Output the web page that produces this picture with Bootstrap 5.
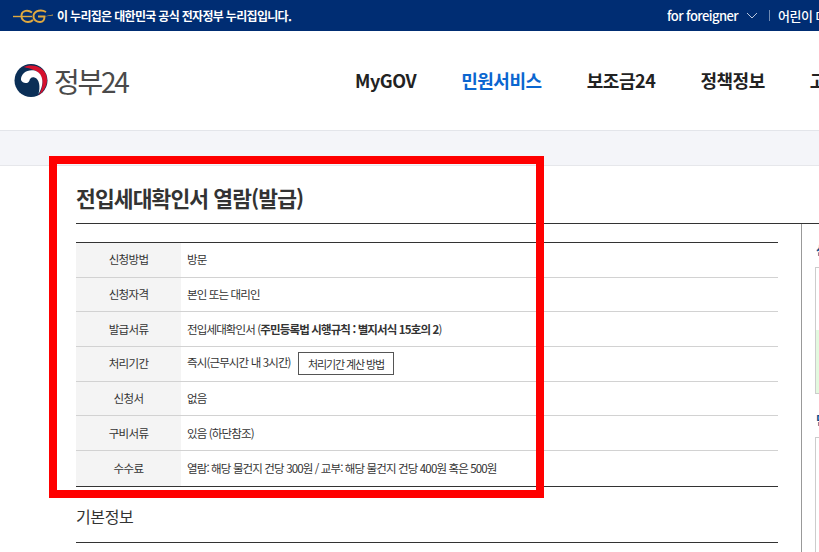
<!DOCTYPE html>
<html lang="ko">
<head>
<meta charset="utf-8">
<title>전입세대확인서 열람(발급)</title>
<link href="https://cdn.jsdelivr.net/npm/bootstrap@5.3.0/dist/css/bootstrap.min.css" rel="stylesheet">
<style>
html, body { height: 552px; overflow: hidden; }
body { font-family: "Noto Sans CJK KR", "Noto Sans", sans-serif; color: #333; position: relative; background: #fff; }
.gov-topbar { height: 31px; background: #002d73; color: #fff; font-size: 12px; font-weight: 700; letter-spacing: -0.68px; padding-left: 13px; white-space: nowrap; }
.gov-topbar-right { margin-left: auto; font-size: 13px; font-weight: 500; letter-spacing: -0.55px; width: 152px; flex: none; overflow: hidden; }
.gov-topbar-sep { width: 1px; height: 11px; background: #6f8ab3; margin: 0 8px 0 11px; flex: none; }
.gov-head { height: 100px; border-bottom: 1px solid #e3e5ea; padding-left: 14px; white-space: nowrap; overflow: hidden; }
.gov-logo-text { font-size: 28px; line-height: 1; color: #4a4a4a; letter-spacing: -2.3px; margin-left: 6px; font-weight: 400; width: 73px; flex: none; }
.gov-nav { margin-left: 228px; gap: 45px; font-size: 18px; font-weight: 700; color: #222; letter-spacing: -0.45px; flex: none; }
.gov-nav-on { color: #0b66d0; }
.gov-strip { height: 35px; background: #f4f5f9; border-bottom: 1px solid #e6e7eb; }
.gov-title-zone { margin-left: 76px; height: 58px; border-bottom: 1px solid #333; }
.gov-title { font-size: 21.5px; font-weight: 700; color: #333; letter-spacing: -0.9px; line-height: 1; margin: 0; padding-top: 21px; }
.gov-main { margin-left: 76px; }
.gov-left { width: 702px; flex: none; padding-top: 18px; }
.gov-info { width: 702px; border-collapse: collapse; border-top: 1px solid #333; border-bottom: 1px solid #333; font-size: 11.5px; letter-spacing: -0.87px; margin: 0; table-layout: fixed; }
.gov-info th, .gov-info td { border-bottom: 1px solid #d2d2d2; padding: 0 6px; vertical-align: middle; height: 34.7px; color: #333; background: transparent; }
.gov-info tr:last-child th, .gov-info tr:last-child td { border-bottom: 0; height: 35.7px; }
.gov-info .gov-label { width: 105px; background: #f4f4f4; text-align: center; font-weight: 400; letter-spacing: -0.65px; }
.gov-calc { border: 1px solid #555; font-size: 11px; letter-spacing: -1.1px; color: #333; padding: 0 9px; height: 23px; line-height: 20px; margin-left: 5px; border-radius: 0; background: #fff; vertical-align: middle; }
.gov-sub { font-size: 16px; font-weight: 400; letter-spacing: -0.4px; color: #333; line-height: 1; margin: 0; padding: 21px 0 18px; border-bottom: 1px solid #333; }
.gov-side { margin-left: 23px; border-left: 1px solid #999; flex: 1 1 auto; height: 330px; padding-left: 13px; overflow: hidden; }
.gov-side-h { font-size: 12px; font-weight: 700; color: #0d4d8c; line-height: 1; height: 12px; margin: 20px 0 11px; padding-left: 1px; }
.gov-side-box { border: 1px solid #ccc; border-right: 0; height: 127px; background: #fff; }
.gov-side-green { height: 63px; margin-top: 62px; background: #e3f9df; }
.gov-side-box2 { height: 130px; }
.gov-mark { position: absolute; left: 49px; top: 156px; width: 495px; height: 342px; border: 8px solid #ff0000; pointer-events: none; }
</style>
</head>
<body>
<div class="gov-topbar d-flex align-items-center">
  <svg width="40" height="16" viewBox="0 0 40 16" class="flex-shrink-0 me-1" aria-hidden="true">
    <path d="M0 8.500H19" stroke="#e0a93f" stroke-width="1.400" fill="none"/>
    <path d="M19 4.500C15 1.500 9 2.500 8.500 7C8 12 12 14 15 14C17 14 19 13 20 12" stroke="#e0a93f" stroke-width="1.900" fill="none"/>
    <path d="M33 4C29 1.500 21.500 2 20.500 7.500C20 12 24 14 27 14C30 14 31.500 12 31.500 8.500H25" stroke="#e0a93f" stroke-width="1.900" fill="none"/>
    <path d="M31 8.500L40 6.500V7.500Z" fill="#e0a93f"/>
  </svg>
  <span>이 누리집은 대한민국 공식 전자정부 누리집입니다.</span>
  <div class="gov-topbar-right d-flex align-items-center">
    <span>for foreigner</span>
    <svg width="12" height="7" viewBox="0 0 12 7" class="ms-2 flex-shrink-0" aria-hidden="true"><path d="M1 1l5 5 5-5" stroke="#b9c6dc" fill="none"/></svg>
    <span class="gov-topbar-sep"></span>
    <span class="text-nowrap">어린이 메뉴</span>
  </div>
</div>
<header class="gov-head d-flex align-items-center">
  <svg width="34" height="33" viewBox="0 0 33 33" class="flex-shrink-0" aria-hidden="true">
    <circle cx="16.500" cy="16.500" r="16.500" fill="#0b2f57"/>
    <path d="M9 3C17-1 33 2 32.500 16.500C32.300 23 28 28.500 24 31.500C29 24 30 13 23 8C18 4.500 12 4 9 3Z" fill="#d5112e"/>
    <path d="M6.500 16C6 9.500 13 5 20 6.500C28 8.500 31 19 24 30C26 23 25 15 20 13.500C17 12.500 15 15 15 16.500C14 20 8 20 6.500 16Z" fill="#fff"/>
  </svg>
  <span class="gov-logo-text">정부24</span>
  <nav class="gov-nav d-flex">
    <span>MyGOV</span><span class="gov-nav-on">민원서비스</span><span>보조금24</span><span>정책정보</span><span>고객센터</span>
  </nav>
</header>
<div class="gov-strip"></div>
<div class="gov-title-zone"><h1 class="gov-title">전입세대확인서 열람(발급)</h1></div>
<div class="gov-main d-flex">
  <div class="gov-left">
    <table class="gov-info">
      <tbody>
        <tr><th class="gov-label" scope="row">신청방법</th><td>방문</td></tr>
        <tr><th class="gov-label" scope="row">신청자격</th><td>본인 또는 대리인</td></tr>
        <tr><th class="gov-label" scope="row">발급서류</th><td>전입세대확인서 (<b>주민등록법 시행규칙 : 별지서식 15호의 2</b>)</td></tr>
        <tr><th class="gov-label" scope="row">처리기간</th><td>즉시(근무시간 내 3시간) <button type="button" class="btn gov-calc">처리기간 계산 방법</button></td></tr>
        <tr><th class="gov-label" scope="row">신청서</th><td>없음</td></tr>
        <tr><th class="gov-label" scope="row">구비서류</th><td>있음 (하단참조)</td></tr>
        <tr><th class="gov-label" scope="row">수수료</th><td>열람: 해당 물건지 건당 300원 / 교부: 해당 물건지 건당 400원 혹은 500원</td></tr>
      </tbody>
    </table>
    <h2 class="gov-sub">기본정보</h2>
  </div>
  <aside class="gov-side">
    <div class="gov-side-h">신</div>
    <div class="gov-side-box"><div class="gov-side-green"></div></div>
    <div class="gov-side-h">민</div>
    <div class="gov-side-box gov-side-box2"></div>
  </aside>
</div>
<div class="gov-mark"></div>
<script src="https://cdn.jsdelivr.net/npm/bootstrap@5.3.0/dist/js/bootstrap.bundle.min.js"></script>
</body>
</html>
